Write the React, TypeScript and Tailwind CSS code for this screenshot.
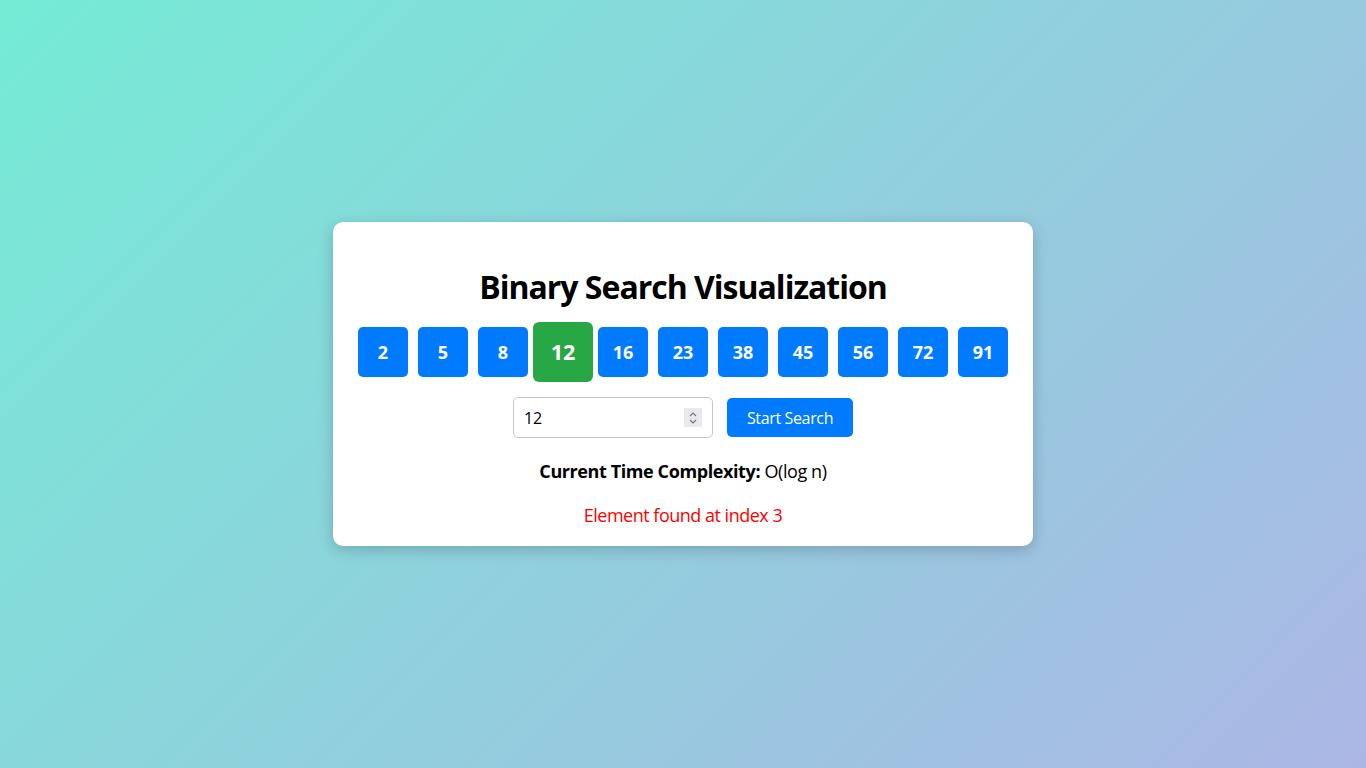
import { useState } from 'react';

const NUMBERS = [2, 5, 8, 12, 16, 23, 38, 45, 56, 72, 91];

export default function App() {
  const [target, setTarget] = useState('12');
  const found = 3;

  return (
    <div
      className="flex h-[768px] w-full items-center justify-center bg-[linear-gradient(135deg,#74ebd5,#acb6e5)] text-black"
      style={{ fontFamily: '"Open Sans", "Noto Sans", sans-serif' }}
    >
      <div className="w-[700px] rounded-[10px] bg-white px-[25px] pt-[43px] pb-[19px] shadow-[0_4px_15px_rgba(0,0,0,0.2)]">
        <h1 className="text-center text-[32px] font-bold leading-[43px] tracking-[-1px]">Binary Search Visualization</h1>
        <div className="mt-[19px] flex justify-center gap-[10px]">
          {NUMBERS.map((n, i) => (
            <div
              key={n}
              className={
                i === found
                  ? 'flex h-[50px] w-[50px] scale-[1.2] items-center justify-center rounded-[5px] bg-[#28a745] text-[18px] font-bold text-white'
                  : 'flex h-[50px] w-[50px] items-center justify-center rounded-[5px] bg-[#007bff] text-[18px] font-bold text-white'
              }
            >
              {n}
            </div>
          ))}
        </div>
        <div className="mt-[20px] flex items-center justify-center gap-[14px]">
          <div className="relative">
            <input
              type="text"
              value={target}
              onChange={(e) => setTarget(e.target.value)}
              className="h-[41px] w-[200px] rounded-[5px] border border-[#c8c8c8] px-[10px] text-[16px] text-black outline-none"
            />
            <div className="absolute top-[11px] right-[11px] flex h-[19px] w-[18px] flex-col items-center justify-center bg-[#e9e9ed]">
              <svg width="10" height="16" viewBox="0 0 10 16" fill="none" stroke="#777" strokeWidth="1.2">
                <path d="M2 6 L5 3 L8 6" />
                <path d="M2 10 L5 13 L8 10" />
              </svg>
            </div>
          </div>
          <button className="h-[39px] rounded-[5px] bg-[#007bff] px-[20px] text-[16px] tracking-[-0.35px] text-white">Start Search</button>
        </div>
        <p className="mt-[21px] text-center text-[18px] leading-[24px] tracking-[-0.4px]">
          <strong>Current Time Complexity:</strong> O(log n)
        </p>
        <p className="mt-[20px] text-center text-[18px] leading-[24px] tracking-[-0.5px] text-[#ff0000]">Element found at index {found}</p>
      </div>
    </div>
  );
}
